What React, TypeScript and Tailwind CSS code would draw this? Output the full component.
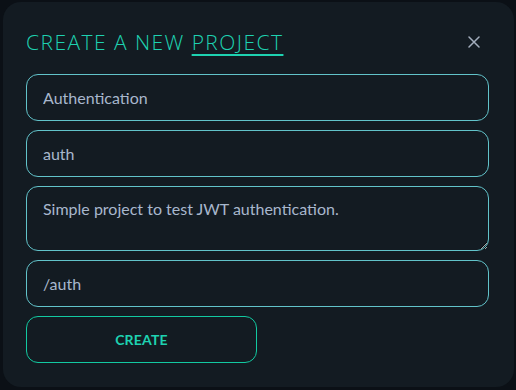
import React from "react";

export default function App() {
  const [name, setName] = React.useState("Authentication");
  const [slug, setSlug] = React.useState("auth");
  const [description, setDescription] = React.useState(
    "Simple project to test JWT authentication."
  );
  const [path, setPath] = React.useState("/auth");

  const fieldClass =
    "w-full h-[47px] rounded-[12px] border border-[#62c3ca] bg-transparent px-4 text-[16px] text-[#a8b7cd] outline-none";

  return (
    <main className="w-[516px] h-[390px] bg-[#0b1016] p-[2px_2px_3px_3px] font-['Lato',sans-serif]">
      <section className="w-full h-full rounded-[18px] bg-[#131b22] px-[23px] pt-[26px]">
        {/* header */}
        <header className="flex items-center justify-between h-[28px] mb-[18px]">
          <h1 className="font-['Open_Sans',sans-serif] font-light text-[21px] tracking-[1.45px] text-[#1ed2b1] leading-none">
            CREATE A NEW{" "}
            <span className="underline decoration-[1.5px] underline-offset-[4px]">PROJECT</span>
          </h1>
          <button type="button" className="mr-[11px] text-[#a3aebd]">
            <svg width="12" height="12" viewBox="0 0 12 12" fill="none">
              <path d="M1 1L11 11M11 1L1 11" stroke="currentColor" strokeWidth="1.5" strokeLinecap="round" />
            </svg>
          </button>
        </header>

        {/* form */}
        <form className="flex flex-col gap-[9px] w-[463px]" onSubmit={(e) => e.preventDefault()}>
          <input className={fieldClass} value={name} onChange={(e) => setName(e.target.value)} />
          <input className={fieldClass} value={slug} onChange={(e) => setSlug(e.target.value)} />
          <textarea
            className="w-full h-[65px] rounded-[12px] border border-[#62c3ca] bg-transparent px-4 pt-[12px] text-[16px] leading-[20px] text-[#a8b7cd] outline-none"
            value={description}
            onChange={(e) => setDescription(e.target.value)}
          />
          <input className={fieldClass} value={path} onChange={(e) => setPath(e.target.value)} />
          <button
            type="submit"
            className="w-[231px] h-[47px] rounded-[12px] border border-[#12c9a1] text-[#1ed2b1] text-[14px] font-bold tracking-[0.2px]"
          >
            CREATE
          </button>
        </form>
      </section>
    </main>
  );
}
